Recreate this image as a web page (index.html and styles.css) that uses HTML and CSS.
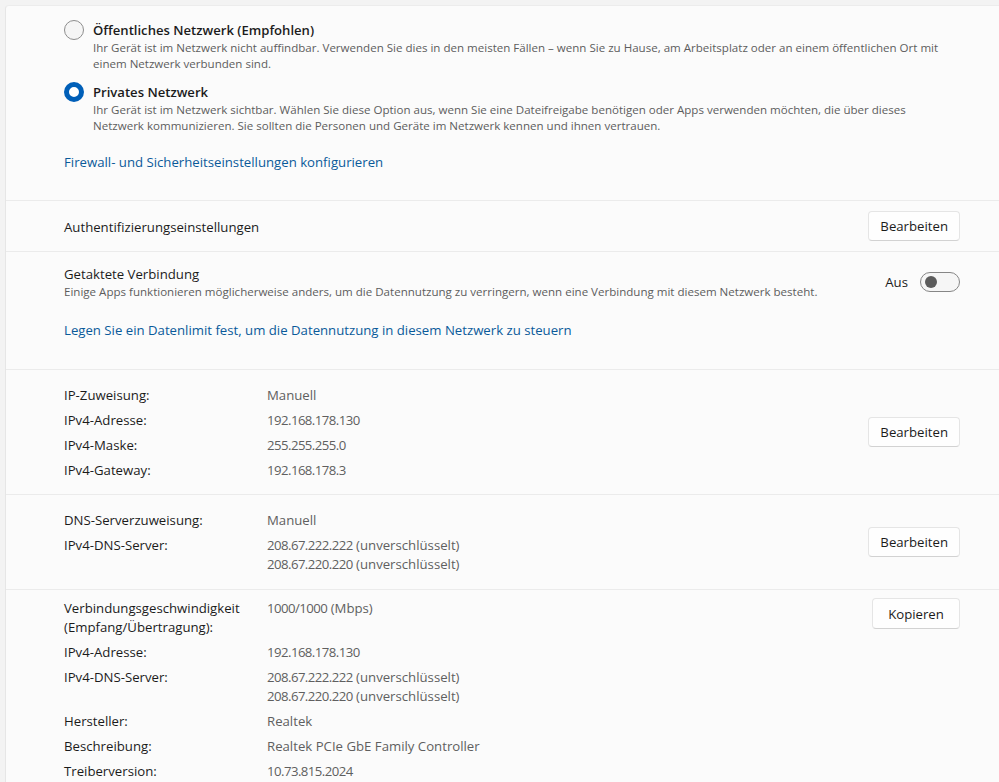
FILE: index.html
```html
<!DOCTYPE html>
<html lang="de">
<head>
<meta charset="utf-8">
<title>Netzwerkeigenschaften</title>
<link rel="stylesheet" href="styles.css">
</head>
<body>
<div class="page">
  <div class="card">
    <section class="sec sec-type">
      <div class="radio-opt">
        <span class="radio"></span>
        <div class="radio-text">
          <div class="radio-title">Öffentliches Netzwerk (Empfohlen)</div>
          <div class="desc">Ihr Gerät ist im Netzwerk nicht auffindbar. Verwenden Sie dies in den meisten Fällen – wenn Sie zu Hause, am Arbeitsplatz oder an einem öffentlichen Ort mit<br>einem Netzwerk verbunden sind.</div>
        </div>
      </div>
      <div class="radio-opt">
        <span class="radio radio-on"></span>
        <div class="radio-text">
          <div class="radio-title">Privates Netzwerk</div>
          <div class="desc">Ihr Gerät ist im Netzwerk sichtbar. Wählen Sie diese Option aus, wenn Sie eine Dateifreigabe benötigen oder Apps verwenden möchten, die über dieses<br>Netzwerk kommunizieren. Sie sollten die Personen und Geräte im Netzwerk kennen und ihnen vertrauen.</div>
        </div>
      </div>
      <a class="link link-fw" href="#">Firewall- und Sicherheitseinstellungen konfigurieren</a>
    </section>

    <section class="sec sec-row">
      <div class="row-title">Authentifizierungseinstellungen</div>
      <button class="btn">Bearbeiten</button>
    </section>

    <section class="sec sec-metered">
      <div class="metered-top">
        <div class="metered-text">
          <div class="row-title">Getaktete Verbindung</div>
          <div class="desc">Einige Apps funktionieren möglicherweise anders, um die Datennutzung zu verringern, wenn eine Verbindung mit diesem Netzwerk besteht.</div>
        </div>
        <div class="toggle-wrap">
          <span class="toggle-label">Aus</span>
          <span class="toggle"></span>
        </div>
      </div>
      <a class="link link-limit" href="#">Legen Sie ein Datenlimit fest, um die Datennutzung in diesem Netzwerk zu steuern</a>
    </section>

    <section class="sec sec-info sec-ip">
      <dl class="props">
        <dt>IP-Zuweisung:</dt><dd>Manuell</dd>
        <dt>IPv4-Adresse:</dt><dd><span class="num">192.168.178.130</span></dd>
        <dt>IPv4-Maske:</dt><dd><span class="num">255.255.255.0</span></dd>
        <dt>IPv4-Gateway:</dt><dd><span class="num">192.168.178.3</span></dd>
      </dl>
      <button class="btn">Bearbeiten</button>
    </section>

    <section class="sec sec-info sec-dns">
      <dl class="props">
        <dt>DNS-Serverzuweisung:</dt><dd>Manuell</dd>
        <dt>IPv4-DNS-Server:</dt><dd><span class="num">208.67.222.222</span> (unverschlüsselt)<br><span class="num">208.67.220.220</span> (unverschlüsselt)</dd>
      </dl>
      <button class="btn">Bearbeiten</button>
    </section>

    <section class="sec sec-info sec-props">
      <dl class="props">
        <dt>Verbindungsgeschwindigkeit<br>(Empfang/Übertragung):</dt><dd><span class="num">1000/1000</span> (Mbps)</dd>
        <dt>IPv4-Adresse:</dt><dd><span class="num">192.168.178.130</span></dd>
        <dt>IPv4-DNS-Server:</dt><dd><span class="num">208.67.222.222</span> (unverschlüsselt)<br><span class="num">208.67.220.220</span> (unverschlüsselt)</dd>
        <dt>Hersteller:</dt><dd>Realtek</dd>
        <dt>Beschreibung:</dt><dd>Realtek PCIe GbE Family Controller</dd>
        <dt>Treiberversion:</dt><dd><span class="num">10.73.815.2024</span></dd>
      </dl>
      <button class="btn btn-copy">Kopieren</button>
    </section>
  </div>
</div>
</body>
</html>
```

FILE: styles.css
```css
* { box-sizing: border-box; }

html, body {
  margin: 0;
  padding: 0;
  background: #f3f3f3;
  font-family: "Segoe UI", "Open Sans", "Noto Sans", sans-serif;
  color: #1b1b1b;
  overflow: hidden;
}

.page {
  padding: 5px 0 0 5px;
  height: 782px;
}

.card {
  background: #fbfbfb;
  border-top: 1px solid #ececec;
  border-left: 1px solid #e6e6e6;
  border-top-left-radius: 4px;
  min-height: 100%;
}

.sec {
  border-top: 1px solid #ebebeb;
  padding: 0 39px 0 58px;
}
.sec:first-child { border-top: none; }

/* network type radios */
.sec-type {
  padding-top: 14px;
  padding-bottom: 28px;
  display: flex;
  flex-direction: column;
  align-items: flex-start;
}
.radio-opt {
  display: flex;
  gap: 9px;
  margin-bottom: 10px;
}
.radio {
  flex: none;
  width: 20px;
  height: 20px;
  border-radius: 50%;
  border: 1px solid #8d8d8d;
  background: #f5f5f5;
}
.radio-on {
  border: 5px solid #005fb8;
  background: #ffffff;
}
.radio-title {
  font-size: 13.1px;
  line-height: 20px;
  font-weight: 600;
}
.desc {
  font-size: 11.55px;
  line-height: 16px;
  color: #5d5d5d;
  white-space: nowrap;
}
.link {
  font-size: 13.2px;
  line-height: 20px;
  color: #0a5a9a;
  text-decoration: none;
}
.link-fw { margin-top: 8px; }

/* single row */
.sec-row {
  display: flex;
  align-items: center;
  justify-content: space-between;
  height: 51px;
}
.row-title {
  font-size: 13.2px;
  line-height: 20px;
}
.sec-row .row-title { padding-top: 1px; }

.btn {
  font-family: inherit;
  font-size: 13.2px;
  color: #1b1b1b;
  background: #fefefe;
  border: 1px solid #e5e5e5;
  border-bottom-color: #d2d2d2;
  border-radius: 4px;
  height: 30px;
  min-width: 90px;
  padding: 0 11px;
  flex: none;
}
.btn-copy { min-width: 88px; height: 31px; }

/* metered */
.sec-metered {
  padding-top: 12px;
  padding-bottom: 29px;
}
.metered-top {
  display: flex;
  align-items: center;
  justify-content: space-between;
}
.toggle-wrap {
  display: flex;
  align-items: center;
  gap: 12px;
  font-size: 13.2px;
  margin-top: -1px;
}
.toggle {
  position: relative;
  width: 40px;
  height: 20px;
  border: 1px solid #868686;
  border-radius: 10px;
  background: #f6f6f6;
}
.toggle::after {
  content: "";
  position: absolute;
  left: 4px;
  top: 3px;
  width: 12px;
  height: 12px;
  border-radius: 50%;
  background: #5c5c5c;
}
.link-limit {
  display: block;
  margin-top: 20px;
}

/* property sections */
.sec-info {
  display: flex;
  justify-content: space-between;
  align-items: center;
}
.sec-ip { padding-top: 16px; padding-bottom: 14px; }
.sec-dns { padding-top: 16px; padding-bottom: 15px; }
.sec-ip .btn,
.sec-dns .btn { margin-bottom: 2px; }
.sec-props { padding-top: 9px; padding-bottom: 20px; align-items: flex-start; }
.sec-props .btn { margin-top: -1px; }

.props {
  margin: 0;
  display: grid;
  grid-template-columns: 203px auto;
  row-gap: 6px;
  font-size: 13.2px;
  line-height: 19px;
}
.props dt { margin: 0; color: #1b1b1b; }
.props dd { margin: 0; color: #5f5f5f; }
.num { letter-spacing: -0.55px; }
```
